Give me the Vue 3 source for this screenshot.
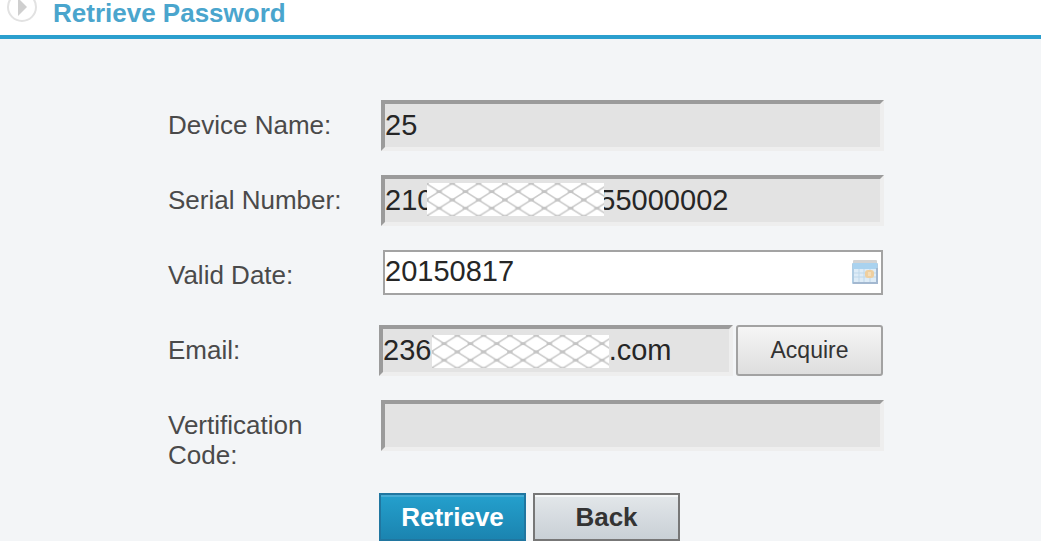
<script setup>
import { ref } from 'vue'

const deviceName = ref('25')
const serialNumber = ref('210' + '\u2002\u2002' + ' '.repeat(17) + '55000002')
const validDate = ref('20150817')
const email = ref('236' + ' '.repeat(22) + '.com')
const code = ref('')
</script>

<template>
  <main class="page">
    <header class="title">
      <svg class="title-icon" viewBox="0 0 32 32" aria-hidden="true">
        <circle cx="16" cy="16" r="14" fill="#fff" stroke="#e2e2e2" stroke-width="2" />
        <path d="M12 7v18l9-9z" fill="#cfcfcf" />
      </svg>
      <h1>Retrieve Password</h1>
    </header>

    <form class="form" @submit.prevent>
      <svg class="defs" width="0" height="0" aria-hidden="true">
        <defs>
          <pattern id="lattice" x="-1" y="0.3" width="26.3" height="16.6" patternUnits="userSpaceOnUse">
            <path
              d="M-1.5 -.95L27.8 17.55M-1.5 17.55L27.8 -.95"
              fill="none"
              stroke="#cacaca"
              stroke-width="1.5"
            />
            <path
              d="M10.4 8.3h5.5M-2.7 0h5.4M23.6 0h5.4M-2.7 16.6h5.4M23.6 16.6h5.4"
              stroke="#c4c4c4"
              stroke-width="3"
            />
          </pattern>
        </defs>
      </svg>

      <div class="row">
        <label for="device">Device Name:</label>
        <div class="field"><input id="device" v-model="deviceName" class="sunken" readonly /></div>
      </div>
      <div class="row">
        <label for="serial">Serial Number:</label>
        <div class="field">
          <input id="serial" v-model="serialNumber" class="sunken" readonly />
          <svg class="mask serial-mask" aria-hidden="true">
            <rect width="100%" height="100%" fill="#fff" />
            <rect width="100%" height="100%" fill="url(#lattice)" />
          </svg>
        </div>
      </div>
      <div class="row">
        <label for="date">Valid Date:</label>
        <div class="field date-field">
          <input id="date" v-model="validDate" class="date" />
          <button type="button" class="calendar" aria-label="Choose date">
            <svg viewBox="0 0 26 26" aria-hidden="true">
              <rect x="1" y="1" width="24" height="5" rx="1" fill="#d3d3d3" />
              <rect x="0" y="4" width="26" height="21" rx="1" fill="#b0cce2" />
              <rect x="1" y="4" width="24" height="6" fill="#a9d2ef" />
              <rect x="2" y="10" width="22" height="13" fill="#deecf7" />
              <path d="M7 10v13M12 10v13M18 10v13M2 14h22M2 18h22" stroke="#bfd8ea" fill="none" />
              <rect x="13" y="11" width="9" height="8" rx="3" fill="#efcf9f" />
              <rect x="16" y="13" width="3" height="4" fill="#f5deb9" />
              <path d="M1 24h24V9" stroke="#a3b8d0" stroke-width="2" fill="none" />
            </svg>
          </button>
        </div>
      </div>
      <div class="row">
        <label for="email">Email:</label>
        <div class="field email-field">
          <input id="email" v-model="email" class="sunken" readonly />
          <svg class="mask email-mask" aria-hidden="true">
            <rect width="100%" height="100%" fill="#fff" />
            <rect width="100%" height="100%" fill="url(#lattice)" />
          </svg>
          <button type="button" class="acquire">Acquire</button>
        </div>
      </div>
      <div class="row">
        <label for="code">Vertification Code:</label>
        <div class="field"><input id="code" v-model="code" class="sunken" /></div>
      </div>

      <div class="actions">
        <button type="submit" class="primary">Retrieve</button>
        <button type="button" class="secondary">Back</button>
      </div>
    </form>
  </main>
</template>

<style>
html {
  background: #f3f5f7;
  overflow: hidden;
}
body {
  margin: 0;
}
</style>

<style scoped>
.page,
.page input,
.page button {
  font-family: "Liberation Sans", Arial, sans-serif;
  box-sizing: border-box;
}
.title {
  display: flex;
  align-items: flex-start;
  gap: 15px;
  height: 39px;
  padding-left: 6px;
  box-sizing: border-box;
  background: #fff;
  border-bottom: 4px solid #2b9fce;
}
.title-icon {
  width: 32px;
  height: 32px;
  margin-top: -9px;
}
h1 {
  margin: 0;
  font-size: 26px;
  line-height: 26px;
  color: #4aa5cd;
}
.form {
  padding: 61px 157px 0 168px;
}
.defs {
  position: absolute;
}
.row {
  display: grid;
  grid-template-columns: 176px 1fr;
  column-gap: 37px;
  min-height: 75px;
}
label {
  padding-top: 10px;
  font-size: 26px;
  line-height: 30px;
  color: #4a4a4a;
}
.field {
  position: relative;
  height: 51px;
}
input {
  display: block;
  width: 100%;
  margin: 0;
  padding: 0;
  border-radius: 0;
  outline: none;
  font-size: 29px;
  color: #262626;
}
.sunken {
  height: 51px;
  border: 4px solid;
  border-color: #9b9b9b #eeeeee #eeeeee #9b9b9b;
  background: #e3e3e3;
}
.date-field {
  padding: 0 1px 0 2px;
}
.date {
  height: 45px;
  padding: 0 40px 2px 0;
  border: 2px solid #a3a3a3;
  background: #fff;
}
.calendar {
  position: absolute;
  top: 9px;
  right: 6px;
  width: 26px;
  height: 26px;
  padding: 0;
  border: 0;
  background: none;
}
.calendar svg {
  display: block;
}
.email-field {
  display: flex;
  gap: 3px;
  margin-left: -2px;
  padding-right: 1px;
}
.email-field .sunken {
  flex: 1;
  min-width: 0;
}
.mask {
  position: absolute;
  width: 177px;
  height: 33px;
}
.serial-mask {
  top: 8px;
  left: 46px;
}
.email-mask {
  top: 10px;
  left: 53px;
}
.acquire {
  width: 147px;
  height: 51px;
  padding: 0;
  border: 2px solid #a2a2a2;
  border-radius: 3px;
  background: linear-gradient(#f5f5f5, #dedede);
  font-size: 23px;
  color: #333;
}
.actions {
  display: flex;
  gap: 7px;
  margin-top: 18px;
  margin-left: 211px;
}
.actions button {
  width: 147px;
  height: 48px;
  padding: 0;
  border-radius: 0;
  font-size: 26px;
  font-weight: bold;
}
.actions .primary {
  border: 2px solid #2076a0;
  background: linear-gradient(#24a0cd, #1b84b0);
  box-shadow: inset 0 2px #48acd4;
  color: #fff;
}
.actions .secondary {
  border: 2px solid #777;
  background: linear-gradient(#e3e7ea, #c9d0d6);
  box-shadow: inset 0 2px #f7f9fa;
  color: #333;
}
</style>
